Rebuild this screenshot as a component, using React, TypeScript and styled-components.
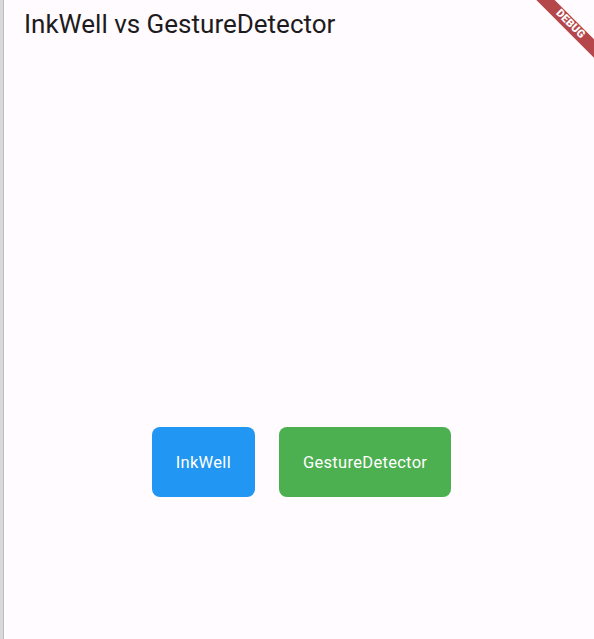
import styled, { createGlobalStyle } from "styled-components";

const GlobalStyle = createGlobalStyle`
  html, body {
    margin: 0;
    padding: 0;
    background: #fffbfe;
  }
  body {
    font-family: Roboto, "Noto Sans", sans-serif;
  }
`;

const Frame = styled.div`
  display: flex;
  width: 594px;
  height: 639px;
  overflow: hidden;
  position: relative;
`;

const EdgeStrip = styled.div`
  width: 3px;
  flex-shrink: 0;
  background: #d9d9d9;
  border-right: 1px solid #bdbdbd;
`;

const Screen = styled.div`
  flex: 1;
  display: flex;
  flex-direction: column;
  background: #fffbfe;
`;

const AppBar = styled.header`
  height: 48px;
  display: flex;
  align-items: center;
  padding: 0 20px;
  box-sizing: border-box;
`;

const Title = styled.h1`
  margin: 0;
  font-size: 26px;
  font-weight: 400;
  color: #1d1b20;
  letter-spacing: 0;
`;

const Body = styled.main`
  flex: 1;
  display: flex;
  justify-content: center;
  padding-top: 379px;
  padding-left: 5px;
  gap: 24px;
  align-items: flex-start;
`;

type ActionProps = { $color: string };

const ActionButton = styled.div<ActionProps>`
  height: 70px;
  padding: 0 24px;
  display: flex;
  align-items: center;
  border-radius: 8px;
  background: ${(p) => p.$color};
  color: #fff;
  font-size: 16.5px;
  font-weight: 400;
  letter-spacing: 0.3px;
  cursor: pointer;
`;

const BannerCorner = styled.div`
  position: absolute;
  top: 0;
  right: 0;
  width: 64px;
  height: 64px;
  overflow: hidden;
  pointer-events: none;
`;

const Ribbon = styled.div`
  position: absolute;
  left: -20.5px;
  top: 18px;
  width: 120px;
  height: 13px;
  background: #b5474b;
  transform: rotate(45deg);
  color: #fff;
  font-size: 11px;
  font-weight: 900;
  line-height: 12px;
  text-align: center;
  letter-spacing: 0.2px;
`;

export default function App() {
  return (
    <Frame>
      <GlobalStyle />
      <EdgeStrip />
      <Screen>
        <AppBar>
          <Title>InkWell vs GestureDetector</Title>
        </AppBar>
        <Body>
          <ActionButton $color="#2196f3">InkWell</ActionButton>
          <ActionButton $color="#4caf50">GestureDetector</ActionButton>
        </Body>
      </Screen>
      <BannerCorner>
        <Ribbon>DEBUG</Ribbon>
      </BannerCorner>
    </Frame>
  );
}
